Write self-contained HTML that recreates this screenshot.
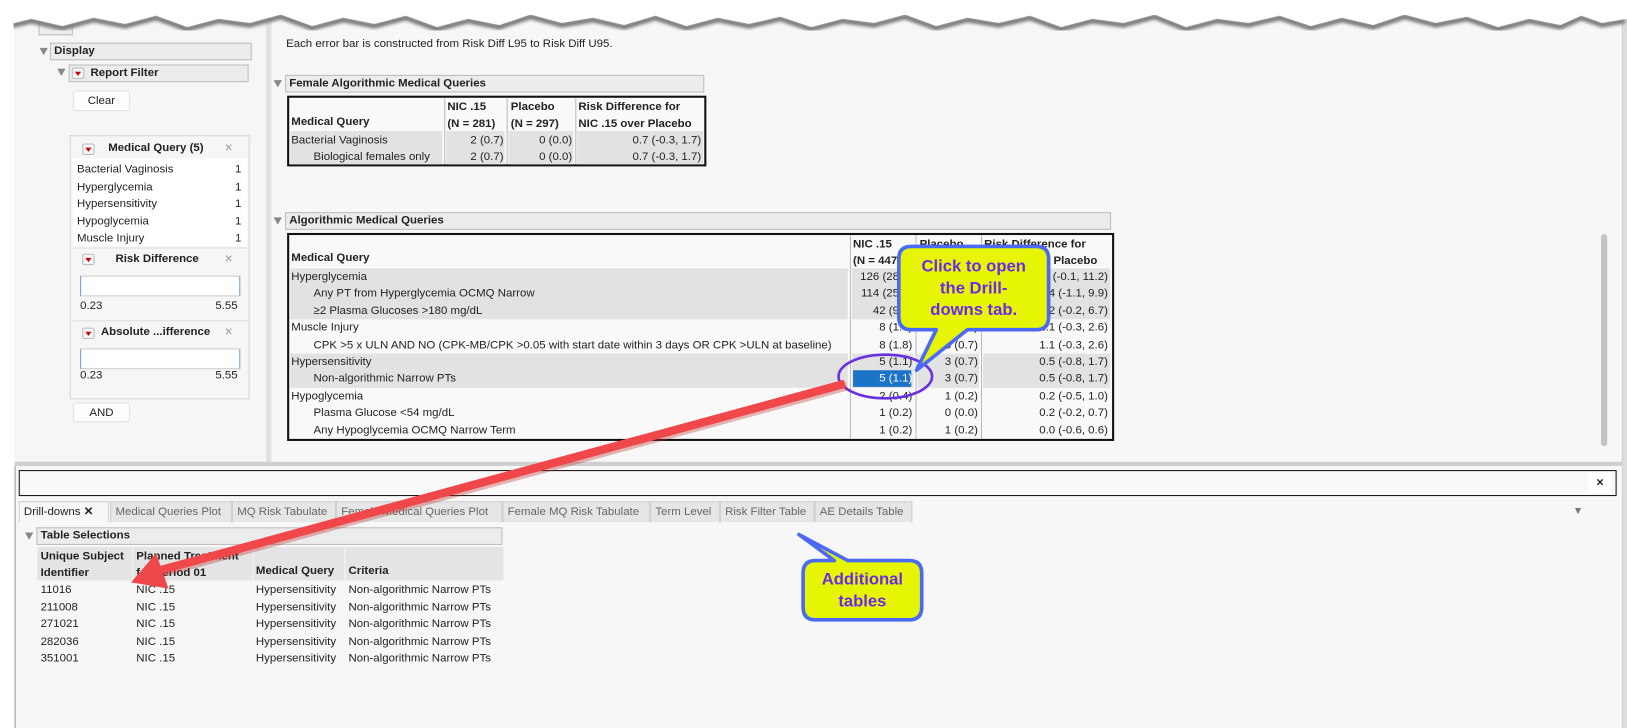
<!DOCTYPE html>
<html><head><meta charset="utf-8"><style>
*{margin:0;padding:0;box-sizing:border-box}
body{width:1627px;height:728px;overflow:hidden;background:#fff;font-family:"Liberation Sans",sans-serif;font-size:11px;color:#222}
#w{position:absolute;left:0;top:0;width:1564px;height:700px;transform:scale(1.0403,1.04);transform-origin:0 0}
.a{position:absolute;white-space:nowrap}
.hdr{position:absolute;background:#ececec;border:1px solid #bdbdbd;font-weight:bold;padding-left:3px;line-height:15px;font-size:11px}
.tri{position:absolute;width:0;height:0;border-left:4px solid transparent;border-right:4px solid transparent;border-top:7px solid #888}
.btn{position:absolute;background:#fdfdfd;border:1px solid #e0e0e0;border-radius:3px;text-align:center;line-height:18px}
.rd{position:absolute;width:12px;height:11px;border:1px solid #bbb;border-radius:2px;background:#f4f4f4}
.rd:after{content:"";position:absolute;left:2px;top:3px;border-left:3px solid transparent;border-right:3px solid transparent;border-top:4px solid #c00}
.sh{position:absolute;background:#e2e2e2}
.r{text-align:right}
.b{font-weight:bold}
.tab{position:absolute;top:482px;height:20px;background:#e6e6e6;border:1px solid #cfcfcf;border-bottom:none;color:#666;line-height:19px;padding-left:4px}
</style></head><body><div id="w">
<div class="a" style="left:14px;top:0;width:1546px;height:700px;background:#f7f7f7;border-left:1px solid #999;border-right:1px solid #ccc"></div>
<div class="a" style="left:14px;top:0;width:243px;height:447px;background:#f6f6f6;border-right:1px solid #d6d6d6"></div>
<div class="a" style="left:257px;top:0;width:4px;height:447px;background:#e2e2e2"></div>
<div class="a" style="left:14px;top:444px;width:1546px;height:4px;background:#cfcfcf"></div>
<div class="a" style="left:1560px;top:0;width:4px;height:700px;background:#ddd"></div>
<div class="a" style="left:37px;top:18px;width:33px;height:16px;background:#ececec;border:1px solid #bbb"></div>
<div class="tri" style="left:38px;top:46px"></div>
<div class="hdr" style="left:48px;top:41px;width:194px;height:17px">Display</div>
<div class="tri" style="left:55px;top:66px"></div>
<div class="hdr" style="left:66px;top:62px;width:173px;height:17px;padding-left:20px">Report Filter</div>
<div class="rd" style="left:69px;top:65px"></div>
<div class="btn" style="left:70px;top:87px;width:55px;height:20px">Clear</div>
<div class="a" style="left:67px;top:130px;width:173px;height:254px;border:1px solid #d6d6d6;background:#f6f6f6"></div>
<div class="rd" style="left:79px;top:138px"></div>
<div class="a b" style="left:104px;top:136px">Medical Query (5)</div>
<div class="a" style="left:216px;top:134px;color:#999;font-size:13px">×</div>
<div class="a" style="left:70px;top:152px;width:168px;height:85px;background:#fff"></div>
<div class="a" style="left:74px;top:155px;line-height:16.6px">Bacterial Vaginosis<br>Hyperglycemia<br>Hypersensitivity<br>Hypoglycemia<br>Muscle Injury</div>
<div class="a r" style="left:220px;top:155px;width:12px;line-height:16.6px">1<br>1<br>1<br>1<br>1</div>
<div class="a" style="left:70px;top:238px;width:168px;height:1px;background:#ddd"></div>
<div class="rd" style="left:79px;top:244px"></div>
<div class="a b" style="left:111px;top:243px">Risk Difference</div>
<div class="a" style="left:216px;top:241px;color:#999;font-size:13px">×</div>
<div class="a" style="left:77px;top:265px;width:154px;height:20px;background:#fff;border:1px solid #ccc;border-left:1px solid #6a9ad8;border-right:1px solid #6a9ad8"></div>
<div class="a" style="left:77px;top:288px">0.23</div><div class="a" style="left:207px;top:288px">5.55</div>
<div class="a" style="left:70px;top:308px;width:168px;height:1px;background:#ddd"></div>
<div class="rd" style="left:79px;top:315px"></div>
<div class="a b" style="left:97px;top:313px">Absolute ...ifference</div>
<div class="a" style="left:216px;top:311px;color:#999;font-size:13px">×</div>
<div class="a" style="left:77px;top:335px;width:154px;height:20px;background:#fff;border:1px solid #ccc;border-left:1px solid #6a9ad8;border-right:1px solid #6a9ad8"></div>
<div class="a" style="left:77px;top:355px">0.23</div><div class="a" style="left:207px;top:355px">5.55</div>
<div class="btn" style="left:70px;top:387px;width:55px;height:19px">AND</div>
<div class="a" style="left:275px;top:36px">Each error bar is constructed from Risk Diff L95 to Risk Diff U95.</div>
<div class="tri" style="left:263px;top:77px"></div>
<div class="hdr" style="left:274px;top:72px;width:403px;height:17px">Female Algorithmic Medical Queries</div>
<div class="a" style="left:276px;top:92px;width:403px;height:68px;border:2px solid #111;background:#f9f9f9"></div>
<div class="a" style="left:427px;top:94px;width:1px;height:64px;background:#bbb"></div>
<div class="a" style="left:487px;top:94px;width:1px;height:64px;background:#bbb"></div>
<div class="a" style="left:553px;top:94px;width:1px;height:64px;background:#bbb"></div>
<div class="a b" style="left:280px;top:111px">Medical Query</div>
<div class="a b" style="left:430px;top:95px;line-height:16px">NIC .15<br>(N = 281)</div>
<div class="a b" style="left:491px;top:95px;line-height:16px">Placebo<br>(N = 297)</div>
<div class="a b" style="left:556px;top:95px;line-height:16px">Risk Difference for<br>NIC .15 over Placebo</div>
<div class="sh" style="left:279px;top:126px;width:146px;height:32px"></div>
<div class="sh" style="left:429px;top:126px;width:56px;height:32px"></div>
<div class="sh" style="left:489px;top:126px;width:62px;height:32px"></div>
<div class="sh" style="left:555px;top:126px;width:121px;height:32px"></div>
<div class="a" style="left:280px;top:127px;line-height:16px">Bacterial Vaginosis<br>&nbsp;&nbsp;&nbsp;&nbsp;&nbsp;&nbsp;&nbsp;Biological females only</div>
<div class="a r" style="left:429px;top:127px;width:55px;line-height:16px">2 (0.7)<br>2 (0.7)</div>
<div class="a r" style="left:489px;top:127px;width:61px;line-height:16px">0 (0.0)<br>0 (0.0)</div>
<div class="a r" style="left:555px;top:127px;width:119px;line-height:16px">0.7 (-0.3, 1.7)<br>0.7 (-0.3, 1.7)</div>
<div class="tri" style="left:263px;top:209px"></div>
<div class="hdr" style="left:274px;top:204px;width:794px;height:17px">Algorithmic Medical Queries</div>
<div class="a" style="left:276px;top:224px;width:795px;height:200px;border:2px solid #111;background:#f9f9f9"></div>
<div class="a" style="left:817px;top:226px;width:1px;height:196px;background:#bbb"></div>
<div class="a" style="left:880px;top:226px;width:1px;height:196px;background:#bbb"></div>
<div class="a" style="left:943px;top:226px;width:1px;height:196px;background:#bbb"></div>
<div class="a b" style="left:280px;top:242px">Medical Query</div>
<div class="a b" style="left:820px;top:227px;line-height:16px">NIC .15<br>(N = 447)</div>
<div class="a b" style="left:884px;top:227px;line-height:16px">Placebo</div>
<div class="a b" style="left:946px;top:227px;line-height:16px">Risk Difference for<br>NIC .15 over Placebo</div>
<div class="sh" style="left:279px;top:258px;width:536px;height:49px"></div>
<div class="sh" style="left:819px;top:258px;width:59px;height:49px"></div>
<div class="sh" style="left:882px;top:258px;width:59px;height:49px"></div>
<div class="sh" style="left:945px;top:258px;width:122px;height:49px"></div>
<div class="sh" style="left:279px;top:340px;width:536px;height:33px"></div>
<div class="sh" style="left:819px;top:340px;width:59px;height:33px"></div>
<div class="sh" style="left:882px;top:340px;width:59px;height:33px"></div>
<div class="sh" style="left:945px;top:340px;width:122px;height:33px"></div>
<div class="a" style="left:820px;top:356px;width:56px;height:16px;background:#1b74c8"></div>
<div class="a" style="left:280px;top:258px;line-height:16.4px">Hyperglycemia<br>&nbsp;&nbsp;&nbsp;&nbsp;&nbsp;&nbsp;&nbsp;Any PT from Hyperglycemia OCMQ Narrow<br>&nbsp;&nbsp;&nbsp;&nbsp;&nbsp;&nbsp;&nbsp;≥2 Plasma Glucoses &gt;180 mg/dL<br>Muscle Injury<br>&nbsp;&nbsp;&nbsp;&nbsp;&nbsp;&nbsp;&nbsp;CPK &gt;5 x ULN AND NO (CPK-MB/CPK &gt;0.05 with start date within 3 days OR CPK &gt;ULN at baseline)<br>Hypersensitivity<br>&nbsp;&nbsp;&nbsp;&nbsp;&nbsp;&nbsp;&nbsp;Non-algorithmic Narrow PTs<br>Hypoglycemia<br>&nbsp;&nbsp;&nbsp;&nbsp;&nbsp;&nbsp;&nbsp;Plasma Glucose &lt;54 mg/dL<br>&nbsp;&nbsp;&nbsp;&nbsp;&nbsp;&nbsp;&nbsp;Any Hypoglycemia OCMQ Narrow Term</div>
<div class="a r" style="left:819px;top:258px;width:58px;line-height:16.4px">126 (28.2)<br>114 (25.5)<br>42 (9.4)<br>8 (1.8)<br>8 (1.8)<br>5 (1.1)<br><span style="color:#fff">5 (1.1)</span><br>2 (0.4)<br>1 (0.2)<br>1 (0.2)</div>
<div class="a r" style="left:882px;top:258px;width:58px;line-height:16.4px">22 (7.4)<br>21 (7.1)<br>7 (2.4)<br>3 (0.7)<br>3 (0.7)<br>3 (0.7)<br>3 (0.7)<br>1 (0.2)<br>0 (0.0)<br>1 (0.2)</div>
<div class="a r" style="left:945px;top:258px;width:120px;line-height:16.4px">5.5 (-0.1, 11.2)<br>4.4 (-1.1, 9.9)<br>3.2 (-0.2, 6.7)<br>1.1 (-0.3, 2.6)<br>1.1 (-0.3, 2.6)<br>0.5 (-0.8, 1.7)<br>0.5 (-0.8, 1.7)<br>0.2 (-0.5, 1.0)<br>0.2 (-0.2, 0.7)<br>0.0 (-0.6, 0.6)</div>
<div class="a" style="left:1539px;top:225px;width:6px;height:204px;background:#c4c4c4;border-radius:3px"></div>
<div class="a" style="left:18px;top:452px;width:1536px;height:25px;border:1px solid #111;background:#f9f9f9"></div>
<div class="a" style="left:1527px;top:454px;width:22px;height:20px;background:#fff;font-weight:bold;text-align:center;line-height:20px;font-size:12px">×</div>
<div class="tab" style="left:18px;width:87px;background:#f7f7f7;color:#222">Drill-downs <b>✕</b></div>
<div class="tab" style="left:106px;width:117px">Medical Queries Plot</div>
<div class="tab" style="left:223px;width:100px">MQ Risk Tabulate</div>
<div class="tab" style="left:323px;width:160px">Female Medical Queries Plot</div>
<div class="tab" style="left:483px;width:142px">Female MQ Risk Tabulate</div>
<div class="tab" style="left:625px;width:67px">Term Level</div>
<div class="tab" style="left:692px;width:91px">Risk Filter Table</div>
<div class="tab" style="left:783px;width:94px">AE Details Table</div>
<div class="a" style="left:1512px;top:486px;color:#777;font-size:10px">▼</div>
<div class="tri" style="left:24px;top:512px"></div>
<div class="hdr" style="left:35px;top:507px;width:448px;height:17px">Table Selections</div>
<div class="a" style="left:36px;top:526px;width:448px;height:32px;background:#e4e4e4"></div>
<div class="a" style="left:127px;top:526px;width:1px;height:32px;background:#f7f7f7"></div>
<div class="a" style="left:243px;top:526px;width:1px;height:32px;background:#f7f7f7"></div>
<div class="a" style="left:331px;top:526px;width:1px;height:32px;background:#f7f7f7"></div>
<div class="a b" style="left:39px;top:527px;line-height:16px">Unique Subject<br>Identifier</div>
<div class="a b" style="left:131px;top:527px;line-height:16px">Planned Treatment<br>for Period 01</div>
<div class="a b" style="left:246px;top:543px">Medical Query</div>
<div class="a b" style="left:335px;top:543px">Criteria</div>
<div class="a" style="left:39px;top:559px;line-height:16.5px">11016<br>211008<br>271021<br>282036<br>351001</div>
<div class="a" style="left:131px;top:559px;line-height:16.5px">NIC .15<br>NIC .15<br>NIC .15<br>NIC .15<br>NIC .15</div>
<div class="a" style="left:246px;top:559px;line-height:16.5px">Hypersensitivity<br>Hypersensitivity<br>Hypersensitivity<br>Hypersensitivity<br>Hypersensitivity</div>
<div class="a" style="left:335px;top:559px;line-height:16.5px">Non-algorithmic Narrow PTs<br>Non-algorithmic Narrow PTs<br>Non-algorithmic Narrow PTs<br>Non-algorithmic Narrow PTs<br>Non-algorithmic Narrow PTs</div>
<svg class="a" style="left:0;top:0" width="1564" height="700" viewBox="0 0 1564 700">
<defs><filter id="bl"><feGaussianBlur stdDeviation="1.5"/></filter></defs>
<polyline points="8,22 14,22 30,18 60,25 90,17 120,23 150,15 180,26 210,18 240,22 270,14 300,25 330,17 360,23 390,15 420,26 450,18 480,24 510,14 540,22 570,17 600,24 630,15 660,25 690,17 720,23 750,16 780,26 810,18 840,22 870,14 900,25 930,17 960,22 990,15 1020,26 1050,18 1080,22 1110,14 1140,26 1170,18 1200,22 1230,15 1260,25 1290,17 1320,24 1350,14 1380,22 1410,16 1440,26 1470,18 1500,24 1520,15 1540,22 1562,18" fill="none" stroke="#777" stroke-width="5" filter="url(#bl)" transform="translate(0,2)"/>
<path d="M0 0H1564V18 L1540 22 1520 15 1500 24 1470 18 1440 26 1410 16 1380 22 1350 14 1320 24 1290 17 1260 25 1230 15 1200 22 1170 18 1140 26 1110 14 1080 22 1050 18 1020 26 990 15 960 22 930 17 900 25 870 14 840 22 810 18 780 26 750 16 720 23 690 17 660 25 630 15 600 24 570 17 540 22 510 14 480 24 450 18 420 26 390 15 360 23 330 17 300 25 270 14 240 22 210 18 180 26 150 15 120 23 90 17 60 25 30 18 14 22 0 20Z" fill="#fff"/>
<rect x="0" y="20" width="13" height="680" fill="#fff"/>
<rect x="1565" y="0" width="10" height="700" fill="#fff"/>
<ellipse cx="851" cy="362" rx="45" ry="21" fill="none" stroke="#6a2fe0" stroke-width="2.5"/>
<g>
<line x1="812" y1="369" x2="155" y2="548" stroke="#b33" stroke-width="9" opacity=".35" transform="translate(2,2)"/>
<line x1="812" y1="369" x2="155" y2="548" stroke="#f0484a" stroke-width="8"/>
<polygon points="126,560 150,532 162,566" fill="#f0484a"/>
</g>
<path d="M876 237 H996 Q1008 237 1008 249 V305 Q1008 317 996 317 H930 L881 356 L900 317 H876 Q864 317 864 305 V249 Q864 237 876 237Z" fill="#e6f503" stroke="#4a6af5" stroke-width="3.5" stroke-linejoin="round"/>
<text x="936" y="261" text-anchor="middle" font-family="Liberation Sans,sans-serif" font-weight="bold" font-size="16" fill="#6a2be6">Click to open</text>
<text x="936" y="282" text-anchor="middle" font-family="Liberation Sans,sans-serif" font-weight="bold" font-size="16" fill="#6a2be6">the Drill-</text>
<text x="936" y="303" text-anchor="middle" font-family="Liberation Sans,sans-serif" font-weight="bold" font-size="16" fill="#6a2be6">downs tab.</text>
<path d="M784 539 H802 L768 514 L815 539 H874 Q886 539 886 551 V584 Q886 596 874 596 H784 Q772 596 772 584 V551 Q772 539 784 539Z" fill="#e6f503" stroke="#4a6af5" stroke-width="3.5" stroke-linejoin="round"/>
<text x="829" y="562" text-anchor="middle" font-family="Liberation Sans,sans-serif" font-weight="bold" font-size="16" fill="#6a2be6">Additional</text>
<text x="829" y="583" text-anchor="middle" font-family="Liberation Sans,sans-serif" font-weight="bold" font-size="16" fill="#6a2be6">tables</text>
</svg>
</div></body></html>
